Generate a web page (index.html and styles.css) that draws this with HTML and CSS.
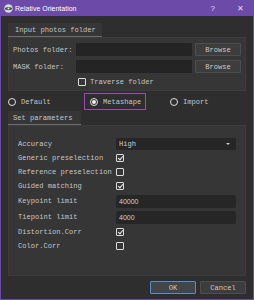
FILE: index.html
```html
<!DOCTYPE html>
<html lang="en">
<head>
    <meta charset="UTF-8">
    <title>Relative Orientation</title>
    <link rel="stylesheet" href="styles.css">
</head>
<body>
    <div class="window">
        <div class="titlebar">
            <svg class="app-icon" width="9" height="9" viewBox="0 0 9 9">
                <circle cx="4.5" cy="4.5" r="4.2" fill="#d8d8d8"/>
                <ellipse cx="4.5" cy="4.6" rx="3.6" ry="1.6" fill="#3a5a4a"/>
                <circle cx="4.5" cy="4.6" r="1" fill="#e8e8e8"/>
            </svg>
            <span class="title">Relative Orientation</span>
            <span class="title-btn help">?</span>
            <span class="title-btn close">&#x2715;</span>
        </div>

        <div class="content">
            <!-- Input photos folder -->
            <div class="tab tab-input">Input photos folder</div>
            <div class="panel panel-input">
                <div class="folder-row">
                    <span class="folder-label">Photos folder:</span>
                    <div class="text-field"></div>
                    <button class="btn">Browse</button>
                </div>
                <div class="folder-row">
                    <span class="folder-label">MASK folder:</span>
                    <div class="text-field"></div>
                    <button class="btn">Browse</button>
                </div>
                <div class="traverse-row">
                    <span class="check"></span>
                    <span>Traverse folder</span>
                </div>
            </div>

            <div class="radio-row">
                <div class="radio-item"><span class="radio"></span>Default</div>
                <div class="radio-item selected"><span class="radio on"></span>Metashape</div>
                <div class="radio-item"><span class="radio"></span>Import</div>
            </div>

            <!-- Set parameters -->
            <div class="tab tab-params">Set parameters</div>
            <div class="panel panel-params">
                <div class="param-row h15">
                    <span class="param-label">Accuracy</span>
                    <div class="combo">High<span class="arrow"></span></div>
                </div>
                <div class="param-row">
                    <span class="param-label">Generic preselection</span>
                    <span class="check checked"></span>
                </div>
                <div class="param-row">
                    <span class="param-label">Reference preselection</span>
                    <span class="check"></span>
                </div>
                <div class="param-row">
                    <span class="param-label">Guided matching</span>
                    <span class="check checked"></span>
                </div>
                <div class="param-row h16">
                    <span class="param-label">Keypoint limit</span>
                    <div class="value-field">40000</div>
                </div>
                <div class="param-row h16">
                    <span class="param-label">Tiepoint limit</span>
                    <div class="value-field">4000</div>
                </div>
                <div class="param-row">
                    <span class="param-label">Distortion.Corr</span>
                    <span class="check checked"></span>
                </div>
                <div class="param-row">
                    <span class="param-label">Color.Corr</span>
                    <span class="check"></span>
                </div>
            </div>

            <div class="footer">
                <button class="btn btn-ok">OK</button>
                <button class="btn">Cancel</button>
            </div>
        </div>
    </div>
</body>
</html>
```

FILE: styles.css
```css
body {
    margin: 0;
    background-color: #2e2e2e;
    font-family: "Liberation Mono", monospace;
    font-size: 7.1px;
    color: #c4c4c4;
}
.window {
    width: 254px;
    height: 300px;
    box-sizing: border-box;
    border: 1px solid #6c4aa8;
    border-top: none;
    background-color: #2e2e2e;
    display: flex;
    flex-direction: column;
}
.titlebar {
    height: 16px;
    margin: 0 -1px;
    background-color: #6c4aa8;
    display: flex;
    align-items: center;
    padding-left: 4px;
    color: #ffffff;
    font-family: "Liberation Sans", Arial, sans-serif;
    font-size: 7px;
}
.app-icon {
    margin-right: 2px;
}
.title {
    flex: 1;
}
.title-btn {
    color: #e6dcf4;
    font-size: 8px;
}
.help {
    margin-right: 22px;
}
.close {
    margin-right: 10px;
    font-size: 8px;
}
.content {
    flex: 1;
    padding: 7px 7px 0 7px;
    display: flex;
    flex-direction: column;
}
.tab {
    height: 14px;
    box-sizing: border-box;
    border-bottom: 1px solid #6e6e6e;
    background-color: #363636;
    display: flex;
    align-items: center;
    padding-left: 7px;
}
.tab-input {
    width: 94px;
}
.tab-params {
    width: 73px;
    padding-left: 5px;
}
.panel {
    background-color: #363636;
    border: 1px solid #3c3c3c;
    box-sizing: border-box;
}
.panel-input {
    height: 54px;
    padding: 5px 4px 0 4px;
}
.folder-row {
    display: flex;
    align-items: center;
    height: 13px;
    margin-bottom: 4px;
}
.folder-label {
    width: 63px;
}
.text-field {
    width: 116px;
    height: 13px;
    background-color: #242424;
    border-radius: 1px;
    margin-right: 3px;
}
.btn {
    font-family: "Liberation Mono", monospace;
    font-size: 7.1px;
    color: #c8c8c8;
    background-color: #3d3d3d;
    border: 1px solid #4e4e4e;
    border-radius: 1px;
    width: 46px;
    height: 13px;
    padding: 0;
}
.traverse-row {
    display: flex;
    align-items: center;
    gap: 4px;
    padding-left: 65px;
    height: 10px;
}
.check {
    width: 8px;
    height: 8px;
    box-sizing: border-box;
    border: 1px solid #dcdcdc;
    border-radius: 1px;
    position: relative;
}
.check.checked::after {
    content: "";
    position: absolute;
    left: 2px;
    top: 0px;
    width: 2px;
    height: 4px;
    border: solid #f0f0f0;
    border-width: 0 1px 1px 0;
    transform: rotate(40deg);
}
.radio-row {
    display: flex;
    align-items: center;
    height: 19px;
    margin-top: 1px;
}
.radio-item {
    display: flex;
    align-items: center;
    gap: 5px;
    height: 17px;
    box-sizing: border-box;
}
.radio-item:first-child {
    width: 76px;
}
.radio-item.selected {
    width: 62px;
    border: 1px solid #9a4bb0;
    padding-left: 5px;
    margin-right: 24px;
}
.radio {
    width: 8px;
    height: 8px;
    box-sizing: border-box;
    border: 1px solid #e0e0e0;
    border-radius: 50%;
    position: relative;
}
.radio.on::after {
    content: "";
    position: absolute;
    left: 1px;
    top: 1px;
    width: 4px;
    height: 4px;
    border-radius: 50%;
    background-color: #f0f0f0;
}
.panel-params {
    height: 151px;
    padding: 10px 9px 0 9px;
}
.param-row {
    display: flex;
    align-items: center;
    height: 14px;
}
.param-row.h15 {
    height: 15px;
}
.param-row.h16 {
    height: 16px;
}
.param-label {
    width: 98px;
}
.combo,
.value-field {
    width: 120px;
    height: 12px;
    box-sizing: border-box;
    background-color: #262626;
    border-radius: 2px;
    padding-left: 3px;
    display: flex;
    align-items: center;
    font-family: "Liberation Sans", Arial, sans-serif;
    font-size: 7px;
    color: #d0d0d0;
}
.value-field {
    height: 13px;
}
.combo {
    font-family: "Liberation Mono", monospace;
    font-size: 7.1px;
    position: relative;
}
.arrow {
    position: absolute;
    right: 6px;
    top: 5px;
    border-left: 2px solid transparent;
    border-right: 2px solid transparent;
    border-top: 2px solid #c8c8c8;
}
.footer {
    display: flex;
    justify-content: flex-end;
    gap: 4px;
    margin-top: 5px;
}
.btn-ok {
    border-color: #5a8cc6;
    background-color: #434649;
}
```
